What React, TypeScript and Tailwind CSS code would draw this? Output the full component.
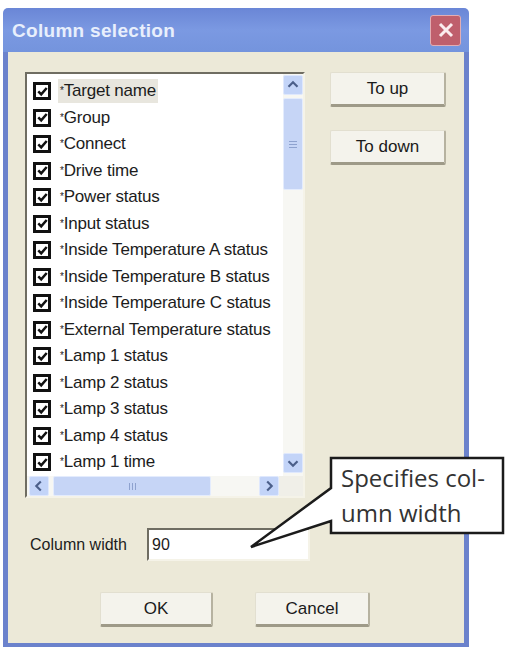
import React from "react";

const items = [
  "Target name",
  "Group",
  "Connect",
  "Drive time",
  "Power status",
  "Input status",
  "Inside Temperature A status",
  "Inside Temperature B status",
  "Inside Temperature C status",
  "External Temperature status",
  "Lamp 1 status",
  "Lamp 2 status",
  "Lamp 3 status",
  "Lamp 4 status",
  "Lamp 1 time",
];

const Check = () => (
  <div className="w-[18px] h-[18px] shrink-0 border-[3px] border-[#111] bg-white flex items-center justify-center">
    <svg width="11" height="11" viewBox="0 0 11 11">
      <path d="M1.3 5.3 L4.2 8.3 L9.7 2" stroke="#111" strokeWidth="2.5" fill="none" />
    </svg>
  </div>
);

const ArrowBtn = ({ dir }: { dir: "up" | "down" | "left" | "right" }) => {
  const paths: Record<string, string> = {
    up: "M5 12 L10 7 L15 12",
    down: "M5 8 L10 13 L15 8",
    left: "M12 5 L7 10 L12 15",
    right: "M8 5 L13 10 L8 15",
  };
  return (
    <div className="w-[20px] h-[20px] shrink-0 bg-[#c3d4f8] border border-[#dfe8fd] rounded-[2px] flex items-center justify-center">
      <svg width="20" height="20" viewBox="0 0 20 20">
        <path d={paths[dir]} stroke="#4b5f8a" strokeWidth="2.4" fill="none" />
      </svg>
    </div>
  );
};

const XpButton = ({ text, className }: { text: string; className?: string }) => (
  <div
    className={
      "h-[35px] flex items-center justify-center bg-[#f4f3ec] border border-[#e2dfd0] border-r-[2px] border-b-[3px] border-r-[#b6b2a0] border-b-[#9e9a88] rounded-[2px] text-[17px] text-[#1a1a1a] " +
      (className || "")
    }
  >
    {text}
  </div>
);

export default function App() {
  return (
    <div
      className="w-[509px] h-[649px] bg-white pt-[8px] pl-[3px] relative overflow-hidden"
      style={{ fontFamily: "'Liberation Sans', Arial, sans-serif" }}
    >
      <div className="w-[466px] h-[639px] flex flex-col">
        {/* title bar */}
        <div className="h-[44px] shrink-0 rounded-t-[5px] bg-gradient-to-b from-[#6a86d6] via-[#7b99e2] to-[#7494dd] flex items-center justify-between pl-[9px] pr-[8px]">
          <span className="text-[19px] font-bold text-[#e8effc] tracking-[0.3px] pt-[2px]">
            Column selection
          </span>
          <div className="w-[31px] h-[31px] rounded-[3px] bg-[#bf5f6c] border border-[#e2adb3] flex items-center justify-center">
            <svg width="20" height="20" viewBox="0 0 20 20">
              <path d="M4 4 L16 16 M16 4 L4 16" stroke="#fbecee" strokeWidth="3" />
            </svg>
          </div>
        </div>

        {/* body */}
        <div className="flex-1 bg-[#ece9d8] border-x-[5px] border-b-[4px] border-[#6b82cc] pl-[17px] pt-[20px] flex flex-col">
          <div className="flex">
            {/* listbox */}
            <div className="w-[280px] h-[426px] border-2 border-t-[#6f6d62] border-l-[#6f6d62] border-r-[#f5f3e8] border-b-[#f5f3e8] bg-white flex flex-col">
              <div className="flex flex-1 min-h-0">
                <div className="flex-1 overflow-hidden pt-[4px]">
                  {items.map((t, i) => (
                    <div key={i} className="h-[26.5px] flex items-center pl-[6px] gap-[7px] whitespace-nowrap">
                      <Check />
                      <span
                        className={
                          "text-[17px] text-[#1c1c1c] leading-[24px] px-[2px] tracking-[-0.2px] " +
                          (i === 0 ? "bg-[#e8e6de]" : "")
                        }
                      >
                        <span className="text-[10px] align-top">*</span>
                        {t}
                      </span>
                    </div>
                  ))}
                </div>
                {/* vertical scrollbar */}
                <div className="w-[20px] flex flex-col bg-[#f7f7f3] pt-[1px] pb-[3px]">
                  <ArrowBtn dir="up" />
                  <div className="h-[92px] mt-[3px] bg-[#c6d5f6] border border-[#e4ecfd] rounded-[2px] flex flex-col items-center justify-center gap-[2px]">
                    <div className="w-[8px] h-[1px] bg-[#8ea2cf]" />
                    <div className="w-[8px] h-[1px] bg-[#8ea2cf]" />
                    <div className="w-[8px] h-[1px] bg-[#8ea2cf]" />
                  </div>
                  <div className="flex-1" />
                  <ArrowBtn dir="down" />
                </div>
              </div>
              {/* horizontal scrollbar */}
              <div className="h-[20px] flex bg-[#f7f7f3] pl-[2px]">
                <ArrowBtn dir="left" />
                <div className="w-[158px] ml-[4px] bg-[#c6d5f6] border border-[#e4ecfd] rounded-[2px] flex items-center justify-center gap-[2px]">
                  <div className="w-[1px] h-[7px] bg-[#8ea2cf]" />
                  <div className="w-[1px] h-[7px] bg-[#8ea2cf]" />
                  <div className="w-[1px] h-[7px] bg-[#8ea2cf]" />
                </div>
                <div className="flex-1" />
                <ArrowBtn dir="right" />
                <div className="w-[24px] bg-[#f0efe8]" />
              </div>
            </div>

            {/* side buttons */}
            <div className="ml-[25px] flex flex-col gap-[23px]">
              <XpButton text="To up" className="w-[116px]" />
              <XpButton text="To down" className="w-[116px]" />
            </div>
          </div>

          {/* column width */}
          <div className="flex items-center mt-[30px] pl-[5px]">
            <span className="text-[16px] text-[#1c1c1c] w-[117px]">Column width</span>
            <div className="w-[163px] h-[33px] bg-white border-2 border-t-[#6f6d62] border-l-[#6f6d62] border-r-[#f5f3e8] border-b-[#f5f3e8] flex items-center pl-[3px] text-[16px] text-[#1c1c1c]">
              90
            </div>
          </div>

          {/* ok / cancel */}
          <div className="flex mt-[31px] pl-[75px] gap-[42px]">
            <XpButton text="OK" className="w-[113px]" />
            <XpButton text="Cancel" className="w-[115px]" />
          </div>
        </div>
      </div>

      {/* callout */}
      <svg className="absolute left-0 top-0 pointer-events-none" width="509" height="649">
        <path
          d="M331 458 H503 V533 H331 V521 L251 547 L331 488 Z"
          fill="white"
          stroke="#1b1b1b"
          strokeWidth="2.5"
          strokeLinejoin="miter"
        />
      </svg>
      <div
        className="absolute left-[341px] top-[460px] text-[24px] leading-[35px] text-[#333]"
        style={{ fontFamily: "'Open Sans', 'Noto Sans', sans-serif" }}
      >
        Specifies col-
        <br />
        umn width
      </div>
    </div>
  );
}
